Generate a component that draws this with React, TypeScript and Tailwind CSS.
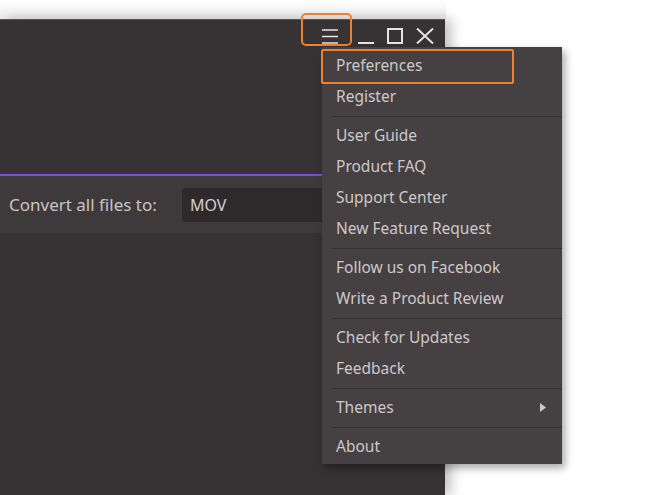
import React from "react";

const font = { fontFamily: '"Noto Sans", "Open Sans", sans-serif' };

function Sep() {
  return (
    <div className="h-[8px] flex items-center pl-[10px]">
      <div className="h-px w-full bg-[#363132]" />
    </div>
  );
}

function Item({ label, arrow }: { label: string; arrow?: boolean }) {
  return (
    <div className="h-[31px] flex items-center pl-[14px] pr-[16px] justify-between text-[15.5px] text-[#cdc9c9]">
      <span>{label}</span>
      {arrow && (
        <svg width="6" height="9" viewBox="0 0 6 9">
          <path d="M0 0 L6 4.5 L0 9 Z" fill="#cdc9c9" />
        </svg>
      )}
    </div>
  );
}

export default function App() {
  return (
    <div
      className="relative w-[646px] h-[495px] overflow-hidden bg-white"
      style={font}
    >
      <div className="absolute left-0 top-0 w-[446px] h-[19px] bg-gradient-to-b from-white to-[#eeeeee]" />
      <div className="pt-[19px] h-full">
        <div className="relative w-[445px] h-full bg-[#373233] border-t border-[#5a5657] shadow-[6px_0_12px_rgba(0,0,0,0.25)] flex flex-col">
          {/* title bar */}
          <div className="h-[32px] flex items-center justify-end pr-[11px] gap-[13px]">
            <svg width="18" height="16" viewBox="0 0 18 16" className="mr-[6px]">
              <path d="M1 2 H17 M1 8.5 H17 M1 15 H17" stroke="#e6e3e3" strokeWidth="1.6" />
            </svg>
            <svg width="16" height="16" viewBox="0 0 16 16">
              <path d="M0 15 H16" stroke="#e6e3e3" strokeWidth="2" />
            </svg>
            <svg width="16" height="16" viewBox="0 0 16 16">
              <rect x="1" y="1" width="14" height="14" fill="none" stroke="#e6e3e3" strokeWidth="2" />
            </svg>
            <svg width="18" height="16" viewBox="0 0 18 16">
              <path d="M1 0.5 L17 15.5 M17 0.5 L1 15.5" stroke="#e6e3e3" strokeWidth="2" />
            </svg>
          </div>
          <div className="h-[122px]" />
          <div className="h-[2px] bg-[#7b4fd6]" />
          <div className="h-[57px] bg-[#3e393a] flex items-center pl-[9px]">
            <span className="text-[17px] text-[#c9c5c5] w-[173px]">Convert all files to:</span>
            <div className="h-[34px] flex-1 bg-[#2e2a2b] rounded-[3px] flex items-center pl-[8px] text-[16px] text-[#d2cece]">
              MOV
            </div>
          </div>
          <div className="flex-1 bg-[#363132]" />
        </div>
      </div>

      {/* hamburger highlight */}
      <div className="absolute left-[301px] top-[13px] w-[51px] h-[33px] border-2 border-[#f0802a] rounded-[5px]" />

      {/* menu */}
      <div className="absolute left-[322px] top-[47px] w-[240px] bg-[#454041] pt-[3px] pb-[2px] shadow-[3px_4px_8px_rgba(0,0,0,0.35)]">
        <Item label="Preferences" />
        <Item label="Register" />
        <Sep />
        <Item label="User Guide" />
        <Item label="Product FAQ" />
        <Item label="Support Center" />
        <Item label="New Feature Request" />
        <Sep />
        <Item label="Follow us on Facebook" />
        <Item label="Write a Product Review" />
        <Sep />
        <Item label="Check for Updates" />
        <Item label="Feedback" />
        <Sep />
        <Item label="Themes" arrow />
        <Sep />
        <Item label="About" />
      </div>

      {/* preferences highlight */}
      <div className="absolute left-[321px] top-[49px] w-[193px] h-[35px] border-2 border-[#f0802a] rounded-[2px]" />
    </div>
  );
}
